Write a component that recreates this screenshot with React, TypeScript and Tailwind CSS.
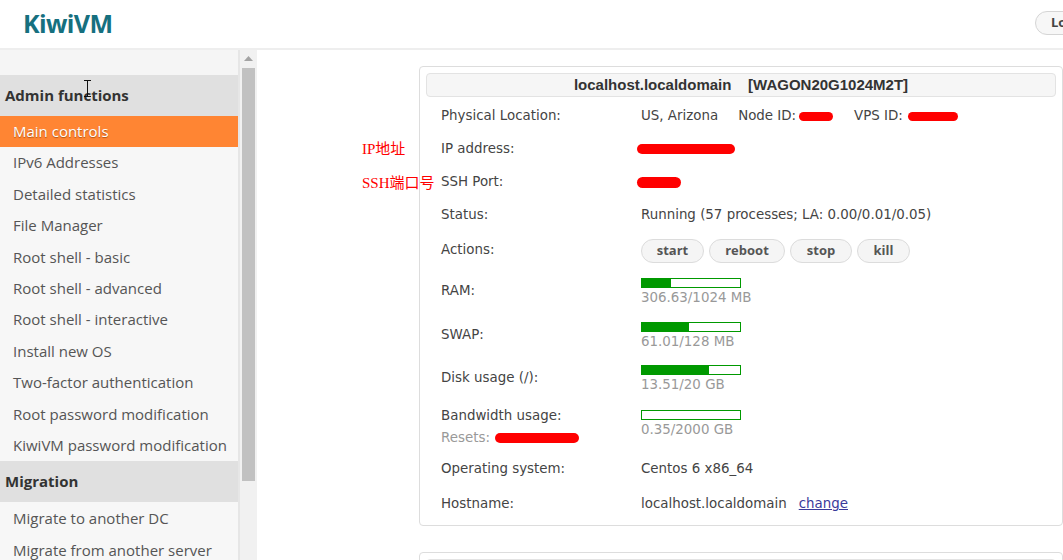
import React from "react";

const menuAdmin = [
  "IPv6 Addresses",
  "Detailed statistics",
  "File Manager",
  "Root shell - basic",
  "Root shell - advanced",
  "Root shell - interactive",
  "Install new OS",
  "Two-factor authentication",
  "Root password modification",
  "KiwiVM password modification",
];

const menuMigration = ["Migrate to another DC", "Migrate from another server"];

function Redact({ w, h = 10, className = "" }: { w: number; h?: number; className?: string }) {
  return (
    <span
      className={"inline-block rounded-full bg-[#ff0000] align-middle " + className}
      style={{ width: w, height: h }}
    />
  );
}

function Bar({ pct, text }: { pct: number; text: string }) {
  return (
    <div className="flex flex-col gap-[2px]">
      <div className="h-[10px] w-[100px] border border-[#009900] bg-white">
        <div className="h-full bg-[#009900]" style={{ width: `${pct}%` }} />
      </div>
      <div className="text-[#999] leading-[16px]">{text}</div>
    </div>
  );
}

function Row({ label, h, children }: { label: React.ReactNode; h: string; children: React.ReactNode }) {
  return (
    <div className={"flex items-center " + h}>
      <div className="w-[200px] shrink-0">{label}</div>
      <div className="flex-1">{children}</div>
    </div>
  );
}

export default function App() {
  return (
    <div className="relative h-[560px] w-full overflow-hidden bg-white font-['Open_Sans',sans-serif]">
      {/* header */}
      <header className="flex h-[50px] items-center justify-between border-b-2 border-[#eeeeee] bg-white">
        <div className="pl-[23px] pb-[2px] text-[25px] font-bold leading-none tracking-[-0.6px] text-[#16707f]">KiwiVM</div>
        <button className="mr-[-49px] mb-[2px] h-[24px] rounded-full border border-[#d5d5d5] bg-[#f7f7f7] px-[15px] text-[13px] font-bold text-[#444]">
          Logout
        </button>
      </header>

      <div className="flex h-[510px]">
        {/* sidebar */}
        <aside className="flex w-[240px] shrink-0 border-r-2 border-[#e6e6e6] bg-[#f7f7f7]">
          <nav className="w-[238px] text-[15px] text-[#555]">
            <div className="h-[25px] bg-[#f5f5f5]" />
            <div className="flex h-[41px] items-center bg-[#e0e0e0] pl-[5px] font-bold text-[#333]">Admin functions</div>
            <div className="flex h-[31px] items-center bg-[#ff8533] pl-[13px] text-white [text-shadow:0_1px_1px_rgba(120,50,0,0.6)]">
              Main controls
            </div>
            {menuAdmin.map((m) => (
              <div key={m} className="flex h-[31.4px] items-center pl-[13px]">
                {m}
              </div>
            ))}
            <div className="flex h-[41px] items-center bg-[#e0e0e0] pl-[5px] font-bold text-[#333]">Migration</div>
            {menuMigration.map((m) => (
              <div key={m} className="flex h-[32px] items-center pl-[13px]">
                {m}
              </div>
            ))}
          </nav>
        </aside>
        {/* scrollbar */}
        <div className="flex w-[17px] shrink-0 flex-col items-center bg-[#f1f1f1]">
          <svg width="9" height="6" viewBox="0 0 9 6" className="mt-[6px]">
            <path d="M4.5 0L9 5H0z" fill="#a3a3a3" />
          </svg>
          <div className="mt-[6px] h-[413px] w-[13px] bg-[#c1c1c1]" />
        </div>

        {/* main */}
        <main className="flex-1 pl-[162px] pt-[16px] font-['DejaVu_Sans',sans-serif] text-[13.4px] text-[#444]">
          <div className="rounded-[4px] border border-[#dddddd] bg-white px-[6px] pt-[6px] pb-[2px]">
            <div className="flex h-[24px] items-center justify-center rounded-[4px] border border-[#e3e3e3] bg-[#f6f6f6] font-['Liberation_Sans',sans-serif] text-[15px] font-bold text-[#333]">
              localhost.localdomain&nbsp;&nbsp;&nbsp;&nbsp;[WAGON20G1024M2T]
            </div>
            <div className="pl-[15px] pt-[3px]">
              <Row label="Physical Location:" h="h-[33px]">
                <span>US, Arizona</span>
                <span className="ml-[20px]">Node ID:</span>
                <Redact w={34} h={9} className="ml-[3px]" />
                <span className="ml-[21px]">VPS ID:</span>
                <Redact w={50} h={9} className="ml-[5px]" />
              </Row>
              <Row label="IP address:" h="h-[33px]">
                <Redact w={98} h={10} className="ml-[-4px]" />
              </Row>
              <Row label="SSH Port:" h="h-[33px]">
                <Redact w={44} h={11} className="ml-[-4px]" />
              </Row>
              <Row label="Status:" h="h-[33px]">
                Running (57 processes; LA: 0.00/0.01/0.05)
              </Row>
              <Row label="Actions:" h="h-[37px]">
                <div className="flex gap-[5px] font-['Open_Sans',sans-serif] text-[13px] font-bold text-[#555]">
                  {[
                    ["start", "w-[63px]"],
                    ["reboot", "w-[76px]"],
                    ["stop", "w-[62px]"],
                    ["kill", "w-[53px]"],
                  ].map(([t, w]) => (
                    <button key={t} className={"h-[24px] rounded-full border border-[#dcdcdc] bg-[#f5f5f5] " + w}>
                      {t}
                    </button>
                  ))}
                </div>
              </Row>
              <Row label="RAM:" h="h-[45px]">
                <Bar pct={30} text="306.63/1024 MB" />
              </Row>
              <Row label="SWAP:" h="h-[43px]">
                <Bar pct={48} text="61.01/128 MB" />
              </Row>
              <Row label="Disk usage (/):" h="h-[43px]">
                <Bar pct={68} text="13.51/20 GB" />
              </Row>
              <Row
                label={
                  <div className="flex flex-col gap-[2px] pt-[2px]">
                    <span>Bandwidth usage:</span>
                    <span className="text-[#999]">
                      Resets: <Redact w={84} h={10} className="ml-[1px]" />
                    </span>
                  </div>
                }
                h="h-[52px]"
              >
                <div className="mt-[-4px]">
                  <Bar pct={0} text="0.35/2000 GB" />
                </div>
              </Row>
              <Row label="Operating system:" h="h-[34px]">
                Centos 6 x86_64
              </Row>
              <Row label="Hostname:" h="h-[37px]">
                localhost.localdomain
                <a className="ml-[12px] text-[#3a3a9a] underline">change</a>
              </Row>
            </div>
          </div>

          <div className="mt-[26px] h-[40px] rounded-[4px] border border-[#dddddd] bg-white px-[6px] pt-[6px]">
            <div className="h-[30px] rounded-[4px] border border-[#e3e3e3] bg-[#f6f6f6]" />
          </div>
        </main>
      </div>

      {/* annotations */}
      <div className="absolute left-[362px] top-[140px] font-['Liberation_Serif','Noto_Sans_CJK_SC',serif] text-[15px] leading-[18px] text-[#ff0000]">
        IP地址
      </div>
      <div className="absolute left-[362px] top-[174px] font-['Liberation_Serif','Noto_Sans_CJK_SC',serif] text-[15px] leading-[18px] text-[#ff0000]">
        SSH端口号
      </div>

      {/* text cursor */}
      <svg className="absolute left-[84px] top-[80px]" width="7" height="17" viewBox="0 0 7 17">
        <path d="M0 0.5H7M0 16.5H7M3.5 0.5V16.5" stroke="#111" strokeWidth="1" fill="none" />
      </svg>
    </div>
  );
}
